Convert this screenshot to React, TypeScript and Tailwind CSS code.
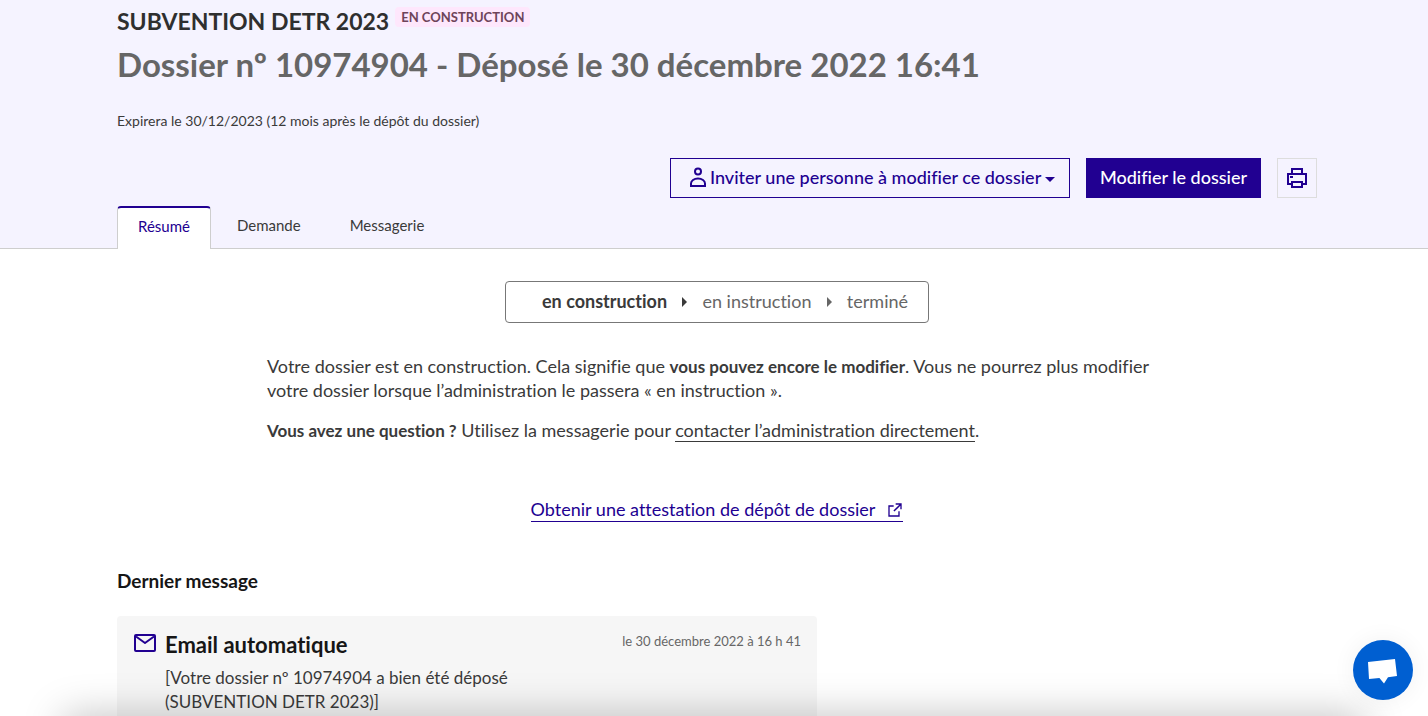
import type { ReactNode } from "react";

function UserIcon() {
  return (
    <svg viewBox="0 0 24 24" className="size-6 shrink-0" fill="none" stroke="currentColor" strokeWidth="2" aria-hidden="true">
      <circle cx="12" cy="6.500" r="3" />
      <path d="M5 21v-2.500c0-2.800 3-5 7-5s7 2.200 7 5V21Z" />
    </svg>
  );
}

function PrinterIcon() {
  return (
    <svg viewBox="0 0 24 24" className="size-6" fill="currentColor" fillRule="evenodd" aria-hidden="true">
      <path d="M6 2h12v5h4v12h-4v3H6v-3H2V7h4V2Zm2 2v3h8V4H8ZM4 9v8h2v-2h12v2h2V9H4Zm4 8v3h8v-3H8ZM5 10h3v2H5v-2Z" />
    </svg>
  );
}

function ExternalIcon() {
  return (
    <svg viewBox="0 0 24 24" className="size-4 shrink-0" fill="currentColor" aria-hidden="true">
      <path d="M10 5v2H4v13h13v-6h2v8H2V5h8Zm12-3v9h-2V5.600l-8.800 8.800-1.600-1.600L18.400 4H13V2h9Z" />
    </svg>
  );
}

function MailIcon() {
  return (
    <svg viewBox="0 0 22 18" className="h-[18px] w-[22px] shrink-0" fill="none" stroke="#210091" strokeWidth="2" strokeLinejoin="round" aria-hidden="true">
      <rect x="1" y="1" width="20" height="16" rx="1" />
      <path d="M2 2.500 11 9l9-6.500" />
    </svg>
  );
}

function StepArrow({ className }: { className: string }) {
  return (
    <svg viewBox="0 0 5 10" className={`h-[10px] w-[5px] shrink-0 ${className}`} fill="currentColor" aria-hidden="true">
      <path d="M0 0l5 5-5 5Z" />
    </svg>
  );
}

function Tab({ active, children }: { active?: boolean; children: ReactNode }) {
  return (
    <a
      href="#"
      aria-current={active ? "page" : undefined}
      className={
        active
          ? "-mb-px flex h-[43px] items-center rounded-t-sm border-x border-t-2 border-x-[#cecece] border-t-[#210091] bg-white px-5 pb-1.5 text-[#210091]"
          : "flex h-[42px] items-center px-[23px] pb-1 text-[#3a3a3a]"
      }
    >
      {children}
    </a>
  );
}

export default function App() {
  return (
    <div className="h-screen overflow-hidden bg-white font-[Lato,sans-serif] text-[18px] leading-6 text-[#3a3a3a] [font-variant-ligatures:none]">
      <header className="border-b border-[#cecece] bg-[#f5f3ff] pl-1.5">
        <div className="mx-auto max-w-[1200px]">
          <h1 className="font-bold">
            <span className="flex items-start gap-1.5 text-[23px] leading-[42px] text-[#2f2f2f]">
              SUBVENTION DETR 2023
              <span className="mt-[7px] rounded bg-[#fee7fc] px-1.5 text-[13px] leading-5 text-[#6e445a]">EN CONSTRUCTION</span>
            </span>
            <span className="block text-[33px] leading-[44px] text-[#666]">Dossier nº 10974904 - Déposé le 30 décembre 2022 16:41</span>
          </h1>
          <p className="mt-[23px] text-[14px]">Expirera le 30/12/2023 (12 mois après le dépôt du dossier)</p>
          <div className="mt-[25px] flex justify-end gap-4">
            <button className="flex h-10 w-[400px] items-center border border-[#210091] pr-4 pb-0.5 pl-[15px] font-medium text-[#210091]">
              <UserIcon />
              <span className="whitespace-nowrap">Inviter une personne à modifier ce dossier</span>
              <svg viewBox="0 0 10 5" className="mt-1 ml-1 h-[5px] w-[10px] shrink-0" fill="currentColor" aria-hidden="true">
                <path d="M0 0h10L5 5Z" />
              </svg>
            </button>
            <button className="h-10 w-[175px] bg-[#210091] pb-0.5 font-medium whitespace-nowrap text-white">Modifier le dossier</button>
            <button aria-label="Imprimer" className="flex size-10 items-center justify-center border border-[#ddd] text-[#210091]">
              <PrinterIcon />
            </button>
          </div>
          <nav className="mt-2 flex items-start gap-[3px] text-[15px]">
            <Tab active>Résumé</Tab>
            <Tab>Demande</Tab>
            <Tab>Messagerie</Tab>
          </nav>
        </div>
      </header>

      <main className="pl-1.5">
        <div className="mx-auto max-w-[1200px] pt-8">
          <div className="mx-auto max-w-[900px]">
            <ol className="mx-auto flex h-[42px] max-w-[424px] items-center justify-between rounded-sm border border-[#777] pr-5 pb-0.5 pl-9 text-[#666]">
              <li className="font-bold text-[#3a3a3a]">en construction</li>
              <StepArrow className="mt-0.5 text-[#3a3a3a]" />
              <li>en instruction</li>
              <StepArrow className="mt-0.5 text-[#666]" />
              <li>terminé</li>
            </ol>
            <p className="mt-[31px]">
              Votre dossier est en construction. Cela signifie que <strong className="text-[17px] leading-none">vous pouvez encore le modifier</strong>. Vous ne pourrez plus modifier votre dossier lorsque l’administration le passera « en instruction ».
            </p>
            <p className="mt-4">
              <strong className="text-[17px] leading-none">Vous avez une question ?</strong> Utilisez la messagerie pour{" "}
              <a href="#" className="border-b border-[#3a3a3a]">contacter l’administration directement</a>.
            </p>
            <div className="mt-14 flex justify-center">
              <a href="#" className="flex items-center gap-3 border-b border-[#210091] leading-[23px] text-[#210091]">
                Obtenir une attestation de dépôt de dossier
                <ExternalIcon />
              </a>
            </div>
          </div>
          <h2 className="mt-[47px] text-[19px] font-bold text-[#161616]">Dernier message</h2>
          <article className="mt-[23px] flex h-40 max-w-[700px] items-start gap-[9px] rounded-sm bg-[#f6f6f6] pt-[17px] pr-4 pl-[17px]">
            <span className="pt-px">
              <MailIcon />
            </span>
            <div className="flex-1">
              <div className="flex justify-between">
                <h3 className="text-[22px] font-bold text-[#161616]">Email automatique</h3>
                <time className="text-[13px] leading-4 text-[#666]">le 30 décembre 2022 à 16 h 41</time>
              </div>
              <p className="mt-[9px] max-w-[400px] text-[17px]">[Votre dossier nº 10974904 a bien été déposé (SUBVENTION DETR 2023)]</p>
            </div>
          </article>
        </div>
      </main>

      <div className="pointer-events-none fixed inset-x-16 -bottom-10 h-10 shadow-[0_0_40px_0_rgba(0,0,0,0.25)]" />
      <button aria-label="Ouvrir la discussion" className="fixed right-[15px] bottom-4 size-[60px] rounded-full bg-[#005fd1] shadow-[0_0_24px_rgba(0,0,0,0.06)]">
        <svg viewBox="0 0 60 60" className="size-full" fill="white" aria-hidden="true">
          <path d="M15 22 42 19l2 17-9 1.200-4 6.300-4.600-5.500L16 39Z" />
        </svg>
      </button>
    </div>
  );
}
